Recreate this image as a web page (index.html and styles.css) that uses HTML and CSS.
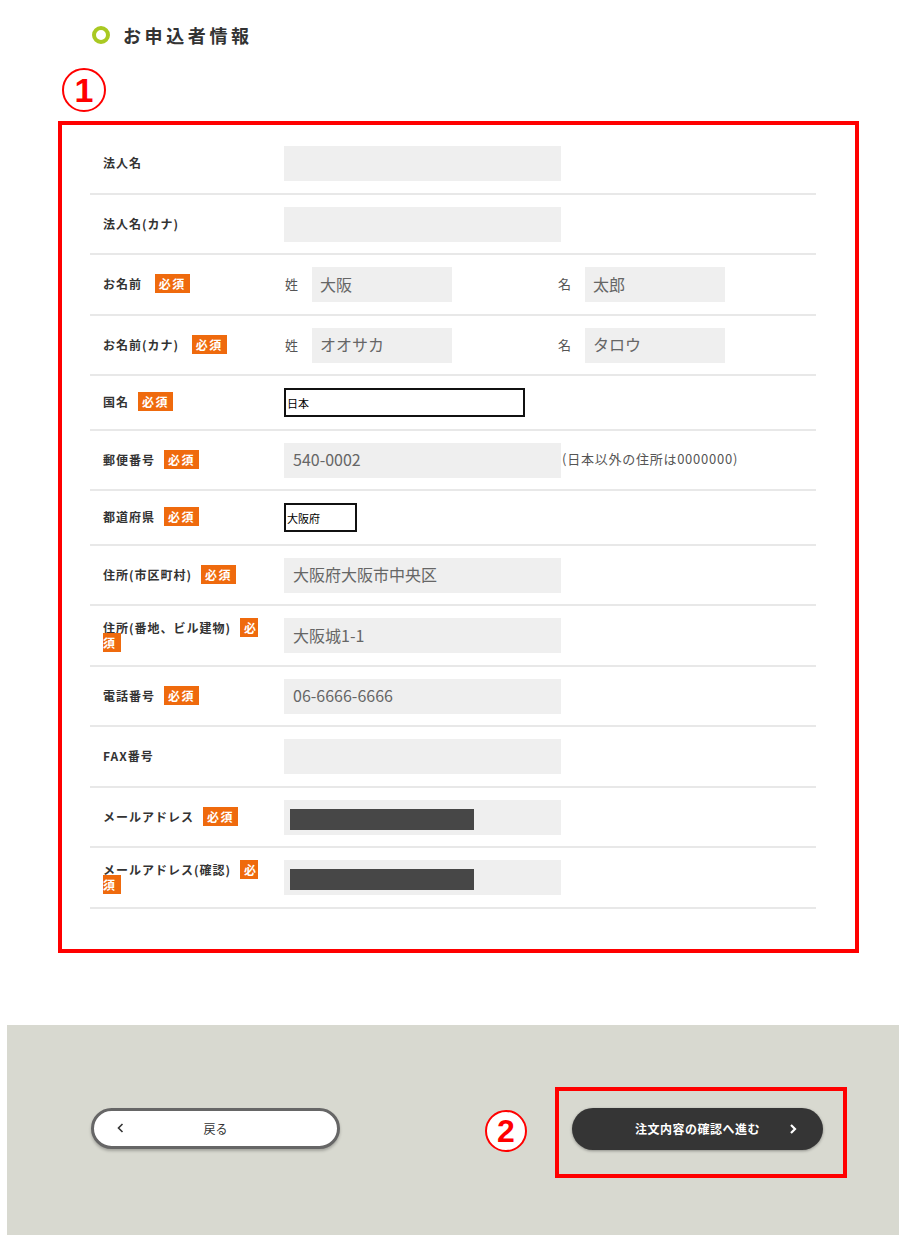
FILE: index.html
```html
<!DOCTYPE html>
<html lang="ja">
<head>
<meta charset="utf-8">
<title>お申込者情報</title>
<link rel="stylesheet" href="styles.css">
</head>
<body>
<div class="page">
  <h2 class="section-title"><span class="ring"></span>お申込者情報</h2>
  <div class="marker marker-1">1</div>

  <div class="form-box">
    <div class="row">
      <div class="label">法人名</div>
      <div class="field"><input class="input" type="text" value=""></div>
    </div>
    <div class="row">
      <div class="label">法人名(カナ)</div>
      <div class="field"><input class="input" type="text" value=""></div>
    </div>
    <div class="row">
      <div class="label">お名前 <span class="req">必須</span></div>
      <div class="field names">
        <div class="name-group"><span class="sub">姓</span><input class="input input-name" type="text" value="大阪"></div>
        <div class="name-group"><span class="sub">名</span><input class="input input-name" type="text" value="太郎"></div>
      </div>
    </div>
    <div class="row">
      <div class="label">お名前(カナ) <span class="req">必須</span></div>
      <div class="field names">
        <div class="name-group"><span class="sub">姓</span><input class="input input-name" type="text" value="オオサカ"></div>
        <div class="name-group"><span class="sub">名</span><input class="input input-name" type="text" value="タロウ"></div>
      </div>
    </div>
    <div class="row">
      <div class="label">国名<span class="req">必須</span></div>
      <div class="field"><select class="select select-country"><option>日本</option></select></div>
    </div>
    <div class="row">
      <div class="label">郵便番号<span class="req">必須</span></div>
      <div class="field"><input class="input" type="text" value="540-0002"><span class="note">(日本以外の住所は0000000)</span></div>
    </div>
    <div class="row">
      <div class="label">都道府県<span class="req">必須</span></div>
      <div class="field"><select class="select select-pref"><option>大阪府</option></select></div>
    </div>
    <div class="row">
      <div class="label">住所(市区町村)<span class="req">必須</span></div>
      <div class="field"><input class="input" type="text" value="大阪府大阪市中央区"></div>
    </div>
    <div class="row">
      <div class="label">住所(番地、ビル建物)<span class="req">必須</span></div>
      <div class="field"><input class="input" type="text" value="大阪城1-1"></div>
    </div>
    <div class="row">
      <div class="label">電話番号<span class="req">必須</span></div>
      <div class="field"><input class="input" type="text" value="06-6666-6666"></div>
    </div>
    <div class="row">
      <div class="label">FAX番号</div>
      <div class="field"><input class="input" type="text" value=""></div>
    </div>
    <div class="row">
      <div class="label">メールアドレス<span class="req">必須</span></div>
      <div class="field"><div class="input input-masked"><span class="mask"></span></div></div>
    </div>
    <div class="row">
      <div class="label">メールアドレス(確認)<span class="req">必須</span></div>
      <div class="field"><div class="input input-masked"><span class="mask"></span></div></div>
    </div>
  </div>

  <div class="footer">
    <a class="btn-back" href="#">
      <svg class="chev chev-left" width="7" height="10" viewBox="0 0 7 10"><polyline points="5.5,1 1.5,5 5.5,9" fill="none" stroke="#333" stroke-width="1.6"/></svg>
      戻る
    </a>
    <div class="next-group">
      <div class="marker marker-2">2</div>
      <div class="annot-box">
        <a class="btn-next" href="#">
          注文内容の確認へ進む
          <svg class="chev chev-right" width="8" height="10" viewBox="0 0 8 10"><polyline points="2,1 6,5 2,9" fill="none" stroke="#fff" stroke-width="2.2"/></svg>
        </a>
      </div>
    </div>
  </div>
</div>
</body>
</html>
```

FILE: styles.css
```css
* {
  box-sizing: border-box;
}

html, body {
  margin: 0;
  padding: 0;
  background: #fff;
}

body {
  font-family: "Noto Sans CJK JP", "Noto Sans", sans-serif;
  color: #333;
}

.page {
  width: 892px;
  margin-left: 7px;
}

/* heading */
.section-title {
  display: flex;
  align-items: center;
  gap: 13px;
  height: 18px;
  margin: 26px 0 0 85px;
  font-size: 18px;
  line-height: 18px;
  font-weight: 700;
  letter-spacing: 3.6px;
  color: #333;
}

.ring {
  width: 18px;
  height: 18px;
  border: 4px solid #a9c922;
  border-radius: 50%;
  flex: none;
}

/* circled annotation numbers */
.marker {
  display: flex;
  align-items: center;
  justify-content: center;
  border: 2px solid #ff0000;
  border-radius: 50%;
  color: #ff0000;
  font-family: "Liberation Sans", Arial, sans-serif;
  font-weight: 700;
  background: #fff;
}

.marker-1 {
  width: 44px;
  height: 44px;
  margin: 24px 0 0 55px;
  font-size: 34px;
  line-height: 1;
}

.marker-2 {
  width: 42px;
  height: 42px;
  margin-top: 23px;
  font-size: 32px;
  line-height: 1;
}

/* form box */
.form-box {
  width: 801px;
  margin: 9px 0 0 51px;
  border: 4px solid #ff0000;
  padding: 9px 39px 40px 28px;
}

.row {
  display: flex;
  align-items: center;
  padding: 12px 0 11.5px;
  border-bottom: 2px solid #e8e8e8;
}

.label {
  width: 194px;
  flex: none;
  padding: 0 16px 0 13px;
  font-size: 12px;
  line-height: 14.4px;
  font-weight: 700;
  letter-spacing: 1px;
  color: #333;
}

.req {
  margin-left: 9px;
  padding: 1px 4px;
  background: #ef6a0d;
  color: #fff;
  font-weight: 700;
  letter-spacing: 1.5px;
}

.field {
  display: flex;
  align-items: center;
  flex: 1;
}

.input {
  display: block;
  width: 277px;
  height: 35px;
  border: none;
  border-radius: 0;
  outline: none;
  background: #efefef;
  padding: 0 9px 2px;
  margin: 0;
  font-family: "Noto Sans CJK JP", "Noto Sans", sans-serif;
  font-size: 16px;
  color: #666;
}

.input-masked {
  padding: 9px 0 0 6px;
}

.mask {
  display: block;
  width: 184px;
  height: 21px;
  background: #474747;
}

.names {
  display: flex;
}

.name-group {
  display: flex;
  align-items: center;
  width: 273px;
}

.sub {
  width: 28px;
  padding-left: 1px;
  margin-top: -2px;
  font-size: 13px;
  color: #555;
}

.input-name {
  width: 140px;
  padding-left: 8px;
}

.note {
  margin-left: 1px;
  margin-top: -3px;
  font-size: 13px;
  letter-spacing: 0.75px;
  color: #555;
}

.select {
  -webkit-appearance: none;
  appearance: none;
  height: 29px;
  border: 2px solid #111;
  border-radius: 0;
  background: #fff;
  padding: 0 1px;
  margin: 0;
  font-family: "Noto Sans CJK JP", "Noto Sans", sans-serif;
  font-size: 11px;
  color: #000;
}

.select-country {
  width: 241px;
}

.select-pref {
  width: 73px;
}

/* footer */
.footer {
  display: flex;
  justify-content: space-between;
  align-items: flex-start;
  height: 210px;
  margin-top: 72px;
  padding: 62px 52px 0 84px;
  background: #d8d9d0;
}

.btn-back {
  position: relative;
  display: flex;
  align-items: center;
  justify-content: center;
  width: 249px;
  height: 41px;
  margin-top: 21px;
  border: 3px solid #666;
  border-radius: 21px;
  background: #fff;
  box-shadow: 0 2px 3px rgba(0, 0, 0, 0.25);
  font-size: 12px;
  color: #333;
  text-decoration: none;
}

.chev {
  position: absolute;
  top: 50%;
  transform: translateY(-50%);
}

.chev-left {
  left: 23px;
}

.chev-right {
  right: 26px;
}

.next-group {
  display: flex;
  align-items: flex-start;
  gap: 28px;
}

.annot-box {
  border: 4px solid #ff0000;
  padding: 17px 20px 24px 13px;
}

.btn-next {
  position: relative;
  display: flex;
  align-items: center;
  justify-content: center;
  width: 251px;
  height: 42px;
  border-radius: 21px;
  background: #353535;
  box-shadow: 0 1px 3px rgba(0, 0, 0, 0.35);
  font-size: 12px;
  font-weight: 700;
  letter-spacing: 0.5px;
  color: #fff;
  text-decoration: none;
}
```
